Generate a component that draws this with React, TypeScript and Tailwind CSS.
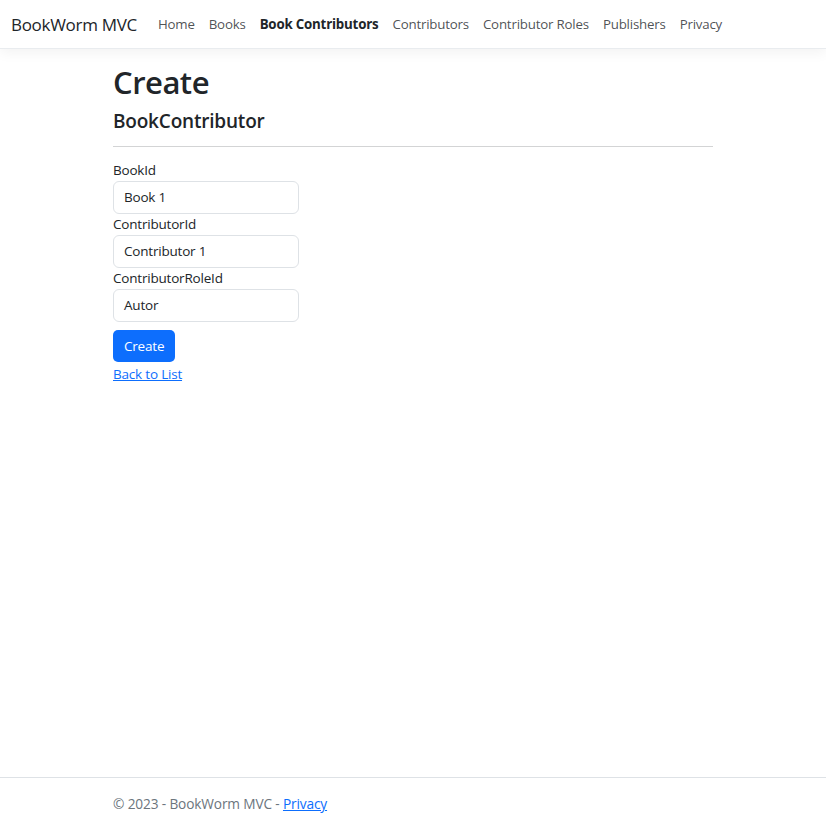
import React from "react";

export default function App() {
  const links = ["Home", "Books", "Book Contributors", "Contributors", "Contributor Roles", "Publishers", "Privacy"];
  return (
    <div className="min-h-screen flex flex-col bg-white text-[#212529] font-['Open_Sans','Noto_Sans',sans-serif]">
      <header className="h-[49px] border-b border-[#e9ecef] shadow-[0_4px_12px_rgba(0,0,0,0.05)] flex items-center px-[11px] shrink-0">
        <span className="text-[17px] tracking-[-0.3px] text-[#212529] mr-[14px] mt-[2px]">BookWorm MVC</span>
        <nav className="flex mt-[2px]">
          {links.map((l) => (
            <span
              key={l}
              className={
                "px-[7px] text-[13.3px] tracking-[-0.2px] " +
                (l === "Book Contributors" ? "font-bold text-[#212529]" : "text-[#212529]/80")
              }
            >
              {l}
            </span>
          ))}
        </nav>
      </header>
      <main className="w-[600px] mx-auto pt-[12px] flex-1">
        <h1 className="text-[31px] leading-[42px] font-semibold tracking-[-0.5px] mb-[6px]">Create</h1>
        <h4 className="text-[19px] leading-[24px] font-semibold tracking-[-0.2px] mb-[13px]">BookContributor</h4>
        <hr className="border-t border-[#d3d4d5] mb-[13px]" />
        <div className="w-[186px] flex flex-col">
          {[
            ["BookId", "Book 1"],
            ["ContributorId", "Contributor 1"],
            ["ContributorRoleId", "Autor"],
          ].map(([label, value]) => (
            <div key={label} className="flex flex-col">
              <label className="text-[13.5px] leading-[21px] tracking-[-0.2px]">{label}</label>
              <div className="h-[33px] border border-[#dee2e6] rounded-[6px] px-[10px] flex items-center text-[13.5px] tracking-[-0.2px]">
                {value}
              </div>
            </div>
          ))}
          <div className="mt-[8px]">
            <button className="h-[32px] px-[11px] rounded-[5px] bg-[#0d6efd] text-white text-[13.5px] tracking-[-0.2px]">
              Create
            </button>
          </div>
          <div className="-mt-[1px]">
            <a className="text-[#0d6efd] underline text-[13.5px] leading-[21px] tracking-[-0.2px]">Back to List</a>
          </div>
        </div>
      </main>
      <footer className="h-[52px] border-t border-[#dee2e6] shrink-0">
        <div className="w-[600px] mx-auto h-full flex items-center text-[13.7px] text-[#6c757d] tracking-[-0.15px] pt-[2px]">
          © 2023 - BookWorm MVC -&nbsp;<a className="text-[#0d6efd] underline">Privacy</a>
        </div>
      </footer>
    </div>
  );
}
